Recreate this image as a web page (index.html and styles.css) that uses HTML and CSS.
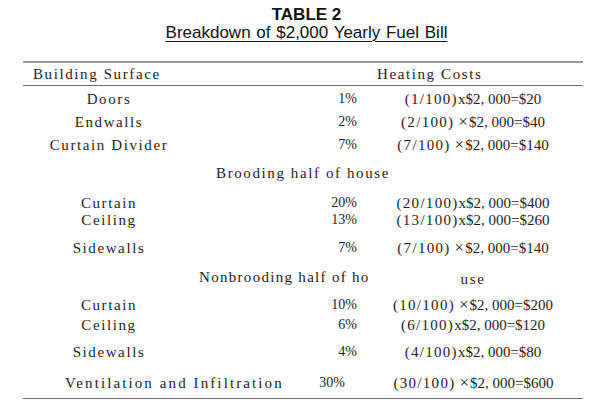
FILE: index.html
```html
<!DOCTYPE html>
<html>
<head>
<meta charset="utf-8">
<link rel="stylesheet" href="styles.css">
</head>
<body>
<div class="doc">
  <h1 class="title">TABLE 2</h1>
  <h2 class="subtitle"><span class="u">Breakdown of $2,000 Yearly Fuel Bill</span></h2>
  <div class="table">
    <div class="head">
      <span class="h-left">Building Surface</span>
      <span class="h-right">Heating Costs</span>
    </div>

    <div class="row mt5"><span class="lbl">Doors</span><span class="pct">1%</span><span class="f"><span class="p">(1/100)</span>x$2, 000=$20</span></div>
    <div class="row mt7"><span class="lbl">Endwalls</span><span class="pct">2%</span><span class="f"><span class="p">(2/100)</span><span class="x">×</span>$2, 000=$40</span></div>
    <div class="row mt7"><span class="lbl">Curtain Divider</span><span class="pct">7%</span><span class="f"><span class="p">(7/100)</span><span class="x">×</span>$2, 000=$140</span></div>

    <div class="row mt12"><span class="sec">Brooding half of house</span></div>

    <div class="row mt14"><span class="lbl lbl-l">Curtain</span><span class="pct">20%</span><span class="f"><span class="p">(20/100)</span>x$2, 000=$400</span></div>
    <div class="row mt1"><span class="lbl lbl-l">Ceiling</span><span class="pct">13%</span><span class="f"><span class="p">(13/100)</span>x$2, 000=$260</span></div>
    <div class="row mt12"><span class="lbl">Sidewalls</span><span class="pct">7%</span><span class="f"><span class="p">(7/100)</span><span class="x">×</span>$2, 000=$140</span></div>

    <div class="row mt13"><span class="sec2">Nonbrooding half of ho</span><span class="f use">use</span></div>

    <div class="row mt12"><span class="lbl lbl-l">Curtain</span><span class="pct">10%</span><span class="f"><span class="p">(10/100)</span><span class="x">×</span>$2, 000=$200</span></div>
    <div class="row mt4"><span class="lbl lbl-l">Ceiling</span><span class="pct">6%</span><span class="f"><span class="p">(6/100)</span>x$2, 000=$120</span></div>
    <div class="row mt11"><span class="lbl">Sidewalls</span><span class="pct">4%</span><span class="f"><span class="p">(4/100)</span>x$2, 000=$80</span></div>

    <div class="row last mt15"><span class="lbl">Ventilation and Infiltration</span><span class="pct">30%</span><span class="f"><span class="p">(30/100)</span><span class="x">×</span>$2, 000=$600</span></div>

    <div class="rule"></div>
  </div>
</div>
</body>
</html>
```

FILE: styles.css
```css
html, body {
  margin: 0;
  padding: 0;
  background: #ffffff;
}

.doc {
  width: 613px;
  padding-top: 6px;
  color: #1e1e1e;
}

.title {
  margin: 0;
  font: 700 17px/18px "Liberation Sans", Arial, sans-serif;
  text-align: center;
  color: #111;
}

.subtitle {
  margin: 0;
  font: 400 17px/18px "Liberation Sans", Arial, sans-serif;
  text-align: center;
  word-spacing: 1px;
  color: #111;
}

.subtitle .u {
  text-decoration: underline;
  text-decoration-thickness: 1px;
  text-underline-offset: 3px;
}

.table {
  width: 560px;
  margin: 19px 0 0 23px;
  font-family: "Liberation Serif", "Times New Roman", serif;
  font-size: 15px;
  letter-spacing: 1.6px;
}

.head {
  display: grid;
  grid-template-columns: 172px 162px 226px;
  height: 22px;
  line-height: 22px;
  border-top: 2px solid #9a9a9a;
  border-bottom: 1px solid #6e6e6e;
}

.h-left {
  grid-column: 1 / span 2;
  padding-left: 10px;
}

.h-right {
  grid-column: 3;
  padding-left: 20px;
}

.row {
  display: grid;
  grid-template-columns: 172px 162px 226px;
  height: 16px;
  line-height: 16px;
  white-space: nowrap;
}

.row.last {
  grid-template-columns: 277px 45px 238px;
}

.lbl {
  grid-column: 1;
  text-align: center;
}

.row.last .lbl {
  text-align: left;
  padding-left: 42px;
  letter-spacing: 2.1px;
}

.pct {
  grid-column: 2;
  text-align: right;
  font-size: 14px;
  letter-spacing: 0;
}

.f {
  grid-column: 3;
  padding-left: 6px;
  text-align: center;
  font-size: 15px;
  letter-spacing: 0;
}

.row.last .f {
  padding-left: 19px;
}

.f .p {
  letter-spacing: 1.3px;
}

.f .x {
  font-size: 17px;
  padding: 0 1px 0 4px;
}

.sec {
  grid-column: 1 / span 3;
  text-align: center;
}

.sec2 {
  grid-column: 1 / span 2;
  padding-left: 176px;
  letter-spacing: 1.3px;
}

.use {
  letter-spacing: 1.6px;
  position: relative;
  top: 2px;
}

.rule {
  margin-top: 7px;
  border-top: 1px solid #6e6e6e;
}

.mt1 { margin-top: 1px; }
.mt4 { margin-top: 4px; }
.mt5 { margin-top: 5px; }
.mt7 { margin-top: 7px; }
.mt11 { margin-top: 11px; }
.mt12 { margin-top: 12px; }
.mt13 { margin-top: 13px; }
.mt14 { margin-top: 14px; }
.mt15 { margin-top: 15px; }
```
